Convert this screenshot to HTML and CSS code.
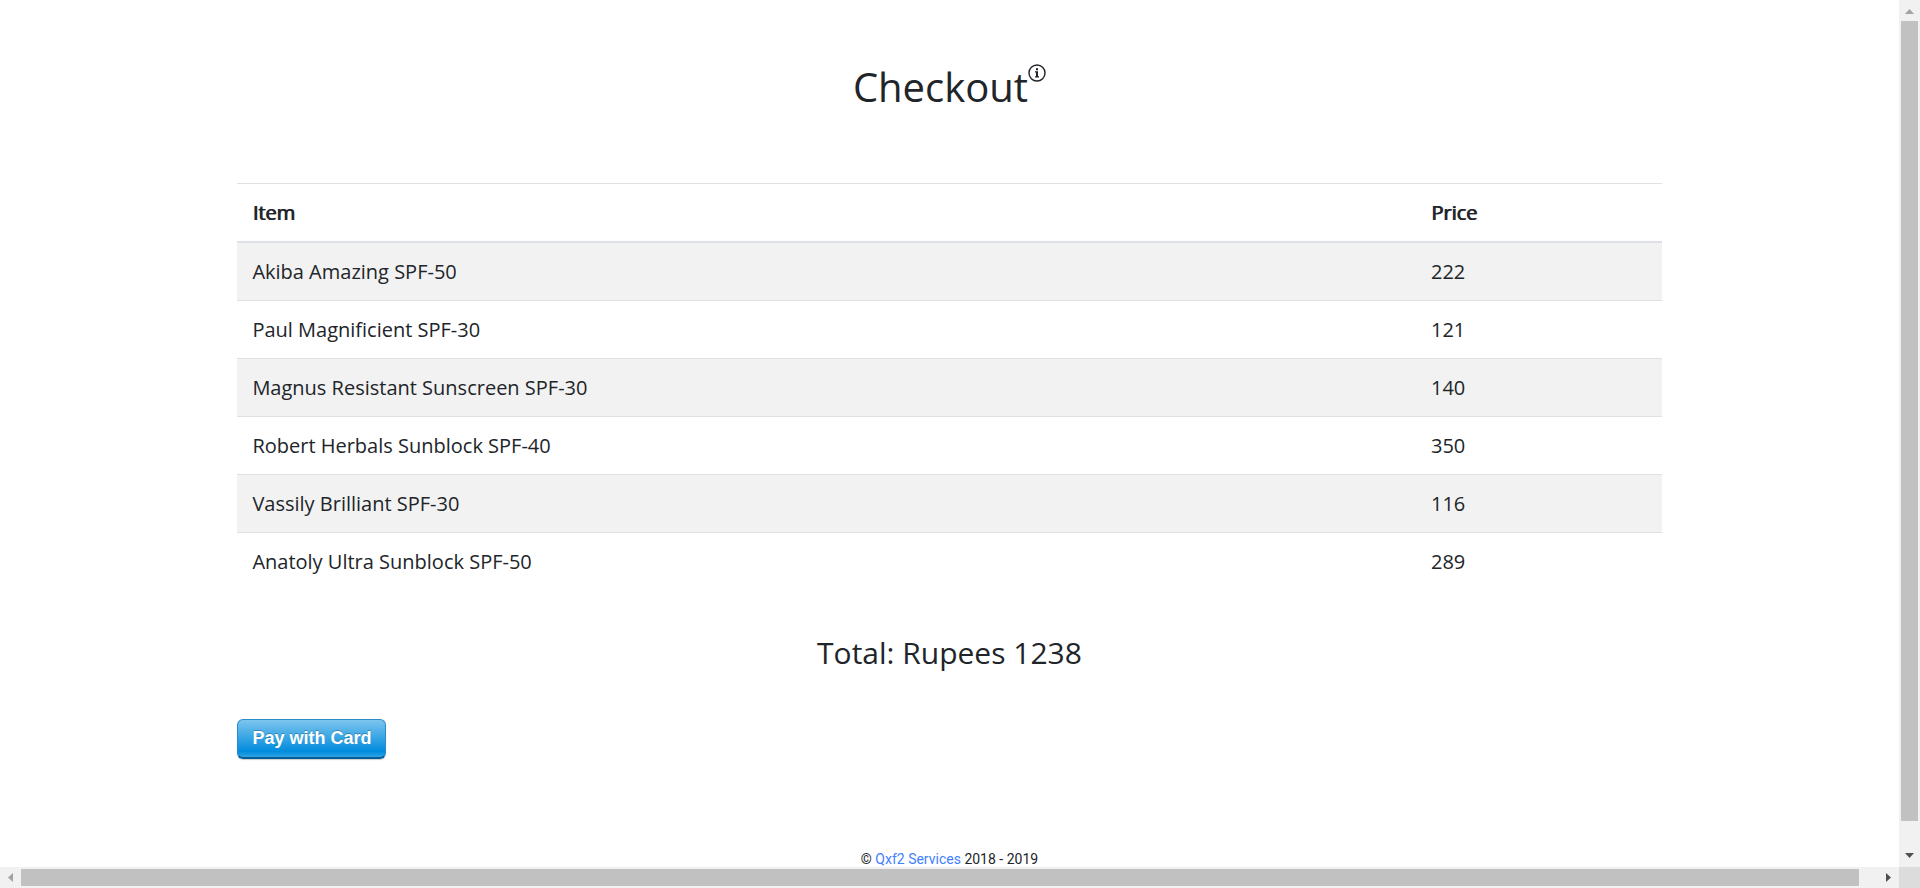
FILE: index.html
```
<!DOCTYPE html>
<html lang="en">
<head>
<meta charset="utf-8">
<title>Checkout</title>
<link rel="stylesheet" href="styles.css">
</head>
<body>
<div class="viewport">
  <div class="page">
    <main class="container">
      <h1 class="title">Checkout<svg class="info-icon" viewBox="0 0 18 18" role="img" aria-label="Info"><circle cx="9" cy="9" r="8" fill="none" stroke="currentColor" stroke-width="1.4"/><path d="M8 4.2h2v2H8zM7 7.2h3v5h1v1.2H7v-1.2h1V8.4H7z" fill="currentColor"/></svg></h1>
      <table class="cart">
        <thead><tr><th scope="col">Item</th><th scope="col">Price</th></tr></thead>
        <tbody>
          <tr><td>Akiba Amazing SPF-50</td><td>222</td></tr>
          <tr><td>Paul Magnificient SPF-30</td><td>121</td></tr>
          <tr><td>Magnus Resistant Sunscreen SPF-30</td><td>140</td></tr>
          <tr><td>Robert Herbals Sunblock SPF-40</td><td>350</td></tr>
          <tr><td>Vassily Brilliant SPF-30</td><td>116</td></tr>
          <tr><td>Anatoly Ultra Sunblock SPF-50</td><td>289</td></tr>
        </tbody>
      </table>
      <p class="total">Total: Rupees 1238</p>
      <button class="pay" type="button">Pay with Card</button>
    </main>
    <footer class="footer">© <a href="#">Qxf2 Services</a> 2018 - 2019</footer>
  </div>
  <div class="scrollbar vertical" aria-hidden="true">
    <svg class="arrow dim" viewBox="0 0 21 21"><path d="M6 14h9l-4.500-5z"/></svg>
    <div class="track"><div class="thumb"></div></div>
    <svg class="arrow" viewBox="0 0 21 21"><path d="M6 7h9l-4.500 5z"/></svg>
  </div>
  <div class="scrollbar horizontal" aria-hidden="true">
    <svg class="arrow dim" viewBox="0 0 21 21"><path d="M13 6v9l-5-4.500z"/></svg>
    <div class="track"><div class="thumb"></div></div>
    <svg class="arrow" viewBox="0 0 21 21"><path d="M8 6v9l5-4.500z"/></svg>
  </div>
  <div class="corner"></div>
</div>
</body>
</html>
```
FILE: styles.css
```
* { box-sizing: border-box; }
body {
  margin: 0;
  color: #212529;
  background: #fff;
  font-family: "Open Sans", sans-serif;
  font-size: 20px;
  line-height: 27px;
}
.viewport {
  display: grid;
  grid-template: minmax(0, 1fr) 21px / minmax(0, 1fr) 21px;
  height: 100vh;
}
.page { overflow: hidden; }
.container { width: 75%; margin: 0 auto; padding-top: 64px; }
.title {
  display: flex;
  justify-content: center;
  margin: 0 0 73px;
  font-size: 40px;
  font-weight: 400;
  line-height: 46px;
}
.info-icon { width: 18px; height: 18px; }
.cart { width: 100%; border-collapse: collapse; }
.cart th, .cart td { padding: 15px; border-top: 1px solid #dee2e6; text-align: left; }
.cart th { border-bottom: 2px solid #dee2e6; font-weight: 400; text-shadow: 1px 0 0 currentColor; }
.cart tbody tr:nth-child(odd) { background: #f2f2f2; }
.total { margin: 45px 0 48px; font-size: 30px; line-height: 36px; text-align: center; }
.pay {
  display: block;
  height: 40px;
  padding: 0 14px;
  border: 1px solid #2a8ccb;
  border-bottom: 2px solid #015e94;
  border-radius: 6px;
  color: #fff;
  background: linear-gradient(#7dc5ee, #008cdd 85%, #30a2e4);
  box-shadow: 0 1px 1px rgba(0, 0, 0, 0.2);
  font: bold 18px "Liberation Sans", Arial, sans-serif;
  text-shadow: 0 -1px 0 rgba(0, 0, 0, 0.25);
}
.footer {
  margin-top: 90px;
  font: 14px/20px "Liberation Sans Narrow", Roboto, sans-serif;
  text-align: center;
}
.footer a { color: #3f80ff; text-decoration: none; }
.scrollbar { display: flex; background: #f1f1f1; }
.vertical { flex-direction: column; }
.arrow { flex: none; width: 21px; height: 21px; fill: #505050; }
.dim { fill: #a3a3a3; }
.track { flex: 1; padding: 0 2px; }
.horizontal .track { padding: 2px 0; }
.thumb { height: 97%; background: #c1c1c1; }
.horizontal .thumb { width: 99%; height: 100%; }
.corner { background: #dcdcdc; }
```
